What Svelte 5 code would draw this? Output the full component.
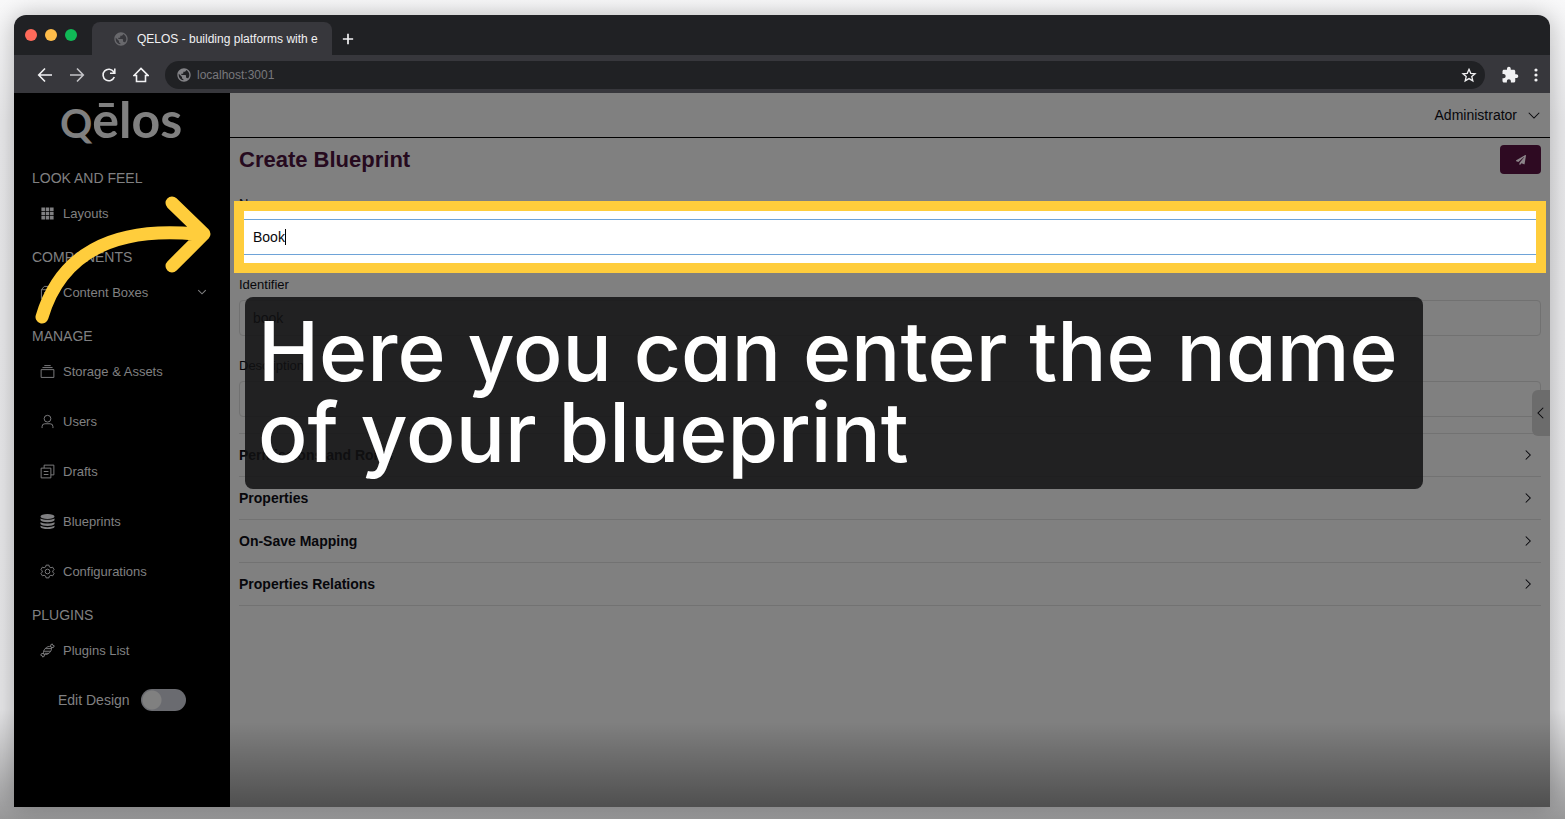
<script>
  let name = $state('Book');
  let identifier = $state('book');
  let description = $state('');

  const groups = [
    { title: 'LOOK AND FEEL', items: [{ label: 'Layouts', icon: 'grid' }] },
    { title: 'COMPONENTS', items: [{ label: 'Content Boxes', icon: 'box', more: true }] },
    {
      title: 'MANAGE',
      items: [
        { label: 'Storage & Assets', icon: 'storage' },
        { label: 'Users', icon: 'user' },
        { label: 'Drafts', icon: 'drafts' },
        { label: 'Blueprints', icon: 'database' },
        { label: 'Configurations', icon: 'gear' }
      ]
    },
    { title: 'PLUGINS', items: [{ label: 'Plugins List', icon: 'plugin' }] }
  ];

  const sections = ['Permissions and Roles', 'Properties', 'On-Save Mapping', 'Properties Relations'];
</script>

{#snippet globe()}
  <svg class="globe" viewBox="0 0 24 24" aria-hidden="true"><path fill="currentColor" d="M12 2C6.480 2 2 6.480 2 12s4.480 10 10 10 10-4.480 10-10S17.520 2 12 2zm-1 17.930c-3.950-.490-7-3.850-7-7.930 0-.620.080-1.210.210-1.790L9 15v1c0 1.100.900 2 2 2v1.930zm6.900-2.540c-.260-.810-1-1.390-1.900-1.390h-1v-3c0-.550-.450-1-1-1H8v-2h2c.550 0 1-.450 1-1V7h2c1.100 0 2-.900 2-2v-.410c2.930 1.190 5 4.060 5 7.410 0 2.080-.800 3.970-2.100 5.390z" /></svg>
{/snippet}

{#snippet chevron(d)}
  <svg class="chevron" viewBox="0 0 16 16" aria-hidden="true"><path d={d} /></svg>
{/snippet}

{#snippet menuIcon(kind)}
  <svg class="menu-icon" viewBox="0 0 16 16" aria-hidden="true">
    {#if kind === 'grid'}
      <path class="solid" d="M1.500 1.500h3.800v3.800H1.500zM6.100 1.500h3.800v3.800H6.100zM10.700 1.500h3.800v3.800h-3.800zM1.500 6.100h3.800v3.800H1.500zM6.100 6.100h3.800v3.800H6.100zM10.700 6.100h3.800v3.800h-3.800zM1.500 10.700h3.800v3.800H1.500zM6.100 10.700h3.800v3.800H6.100zM10.700 10.700h3.800v3.800h-3.800z" />
    {:else if kind === 'box'}
      <path d="M1.500 5h9v9.500h-9zM1.500 5l3-3.500h10L10.500 5M14.500 1.500v9l-4 4M4.500 8h3" />
    {:else if kind === 'storage'}
      <path d="M1.200 6h13.600v8.300H1.200zM2.600 3.800h10.800M4.600 1.700h6.800" />
    {:else if kind === 'user'}
      <circle cx="8" cy="5" r="3.600" /><path d="M2.200 15v-1.600a3 3 0 0 1 3-3h5.600a3 3 0 0 1 3 3V15" />
    {:else if kind === 'drafts'}
      <path d="M1.200 4.400h10.400v10.400H1.200zM4.400 4.400V1.200h10.400v10.400h-3.200M4 8h5M4 11.200h5" />
    {:else if kind === 'database'}
      <g class="solid"><ellipse cx="8" cy="2.600" rx="7.500" ry="2.600" /><path d="M.5 4.700c3 2 12 2 15 0v2c-1.500 2.700-13.500 2.700-15 0zM.5 8.700c3 2 12 2 15 0v2c-1.500 2.700-13.500 2.700-15 0zM.5 12.500c3 2 12 2 15 0v1.300c-1.500 2.900-13.500 2.900-15 0z" /></g>
    {:else if kind === 'gear'}
      <circle cx="8" cy="8" r="2.500" /><path d="M6.500 1.200h3l.500 1.900 1.600.9 1.900-.6 1.500 2.600-1.400 1.400v1.200l1.400 1.400-1.500 2.600-1.900-.6-1.600.9-.5 1.900h-3L6 12.900l-1.600-.9-1.900.6L1 10l1.400-1.400V7.400L1 6l1.500-2.600 1.900.6L6 3.100z" />
    {:else}
      <path d="M4 12C2.200 8 7.500 2.200 12 4 13.800 8 8.500 13.800 4 12zM3.800 8.800h7.400M5.500 6h7M5 11h4.500M11.300 4l.2-2.200 1.700-.8.500 1.500 1.500.5-.8 1.700-2.200.2M4.700 12l-.2 2.200-1.700.8-.5-1.500-1.500-.5.800-1.700 2.200-.2" />
    {/if}
  </svg>
{/snippet}

<div class="desktop">
  <div class="window">
    <header class="chrome">
      <div class="tabs">
        <div class="lights"><i class="red"></i><i class="amber"></i><i class="green"></i></div>
        <div class="tab">{@render globe()}<span>QELOS - building platforms with e</span></div>
        <button class="new-tab" aria-label="New tab"><svg viewBox="0 0 14 14"><path d="M7 1v12M1 7h12" /></svg></button>
      </div>
      <div class="toolbar">
        <button aria-label="Back"><svg viewBox="0 0 16 16"><path d="M15 8H2M8 1.500L1.700 8 8 14.500" /></svg></button>
        <button class="faded" aria-label="Forward"><svg viewBox="0 0 16 16"><path d="M1 8h13M8 1.500L14.300 8 8 14.500" /></svg></button>
        <button aria-label="Reload"><svg viewBox="0 0 16 16"><path d="M13.300 10a5.800 5.800 0 1 1-.6-5.200L13.800 6.200M13.800 1.500v4.800H9" /></svg></button>
        <button aria-label="Home"><svg viewBox="0 0 16 16"><path d="M1 8.500L8 1.500l7 7h-2.500v6h-9v-6z" /></svg></button>
        <div class="address">
          {@render globe()}
          <input aria-label="Address" value="localhost:3001" />
          <svg class="star" viewBox="0 0 24 24" aria-hidden="true"><path d="M12 3.500l2.600 6 6.500.6-4.900 4.300 1.500 6.400-5.700-3.400-5.700 3.400 1.500-6.400-4.900-4.300 6.500-.6z" /></svg>
        </div>
        <button class="ext" aria-label="Extensions"><svg viewBox="0 0 24 24"><path class="solid" d="M20.500 11H19V7c0-1.100-.900-2-2-2h-4V3.500C13 2.120 11.880 1 10.500 1S8 2.120 8 3.500V5H4c-1.100 0-1.990.900-1.990 2v3.800H3.500c1.490 0 2.700 1.210 2.700 2.700s-1.210 2.700-2.700 2.700H2V20c0 1.100.900 2 2 2h3.800v-1.500c0-1.490 1.210-2.700 2.700-2.700 1.490 0 2.700 1.210 2.700 2.700V22H17c1.100 0 2-.900 2-2v-4h1.500c1.380 0 2.500-1.120 2.500-2.500S21.880 11 20.500 11z" /></svg></button>
        <button class="dots" aria-label="Browser menu"><svg viewBox="0 0 4 16"><g class="solid"><circle cx="2" cy="3" r="1.600" /><circle cx="2" cy="8" r="1.600" /><circle cx="2" cy="13" r="1.600" /></g></svg></button>
      </div>
    </header>

    <div class="app">
      <aside class="sidebar">
        <div class="logo"><span class="initial">Q</span>ēlos</div>
        <nav>
          {#each groups as group}
            <h2>{group.title}</h2>
            {#each group.items as item}
              <a href="#{item.icon}">
                {@render menuIcon(item.icon)}
                <span>{item.label}</span>
                {#if item.more}{@render chevron('M3 5.500l5 5 5-5')}{/if}
              </a>
            {/each}
          {/each}
        </nav>
        <label class="design">Edit Design <input type="checkbox" role="switch" /></label>
        <svg class="arrow" viewBox="0 0 180 132" aria-hidden="true"><path d="M10 123C28 62 78 32 164 40M140 9l32 31-32 32" /></svg>
      </aside>

      <main>
        <div class="topbar">
          <button class="account">Administrator {@render chevron('M1 5l7 7 7-7')}</button>
        </div>
        <form class="content" onsubmit={(e) => e.preventDefault()}>
          <div class="title">
            <h1>Create Blueprint</h1>
            <button class="save" aria-label="Save"><svg viewBox="0 0 512 512"><path d="M476 3.200L12.500 270.600c-18.100 10.400-15.800 35.600 2.200 43.200L121 358.400l287.300-253.200c5.500-4.900 13.300 2.600 8.600 8.300L176 407v80.500c0 23.600 28.500 32.900 42.500 15.800L282 426l124.600 52.200c14.200 6 30.400-2.900 33-18.200l72-432C515 7.800 493.300-6.800 476 3.200z" /></svg></button>
          </div>
          <div class="field">
            <label for="name">Name</label>
            <div class="spotlight"><input id="name" bind:value={name} /><i class="caret"></i></div>
          </div>
          <div class="field">
            <label for="identifier">Identifier</label>
            <input id="identifier" bind:value={identifier} />
          </div>
          <div class="field">
            <label for="description">Description</label>
            <input id="description" bind:value={description} />
          </div>
          <div class="sections">
            {#each sections as section}
              <button type="button">{section}{@render chevron('M5 2l6 6-6 6')}</button>
            {/each}
          </div>
        </form>
        <button class="drawer" aria-label="Open panel">{@render chevron('M11 1L4 8l7 7')}</button>
        <p class="caption">Here you can enter the name<br />of your blueprint</p>
      </main>
    </div>
  </div>
</div>

<style>
  :global(body) { margin: 0; background: #f4f4f5; }
  * { box-sizing: border-box; }
  button, input { font: inherit; color: inherit; border: 0; background: none; padding: 0; margin: 0; }
  svg { display: block; flex: none; fill: none; stroke: currentColor; }
  .solid { fill: currentColor; stroke: none; }

  .desktop {
    min-height: 100vh;
    display: flex;
    padding: 15px 15px 12px 14px;
    overflow: hidden;
    font-family: "Liberation Sans", Arial, sans-serif;
    background: linear-gradient(#f9f9fa, #e9e9eb 120px, #e6e6e8 calc(100% - 110px), #989899);
  }
  .window {
    flex: 1;
    min-width: 0;
    display: flex;
    flex-direction: column;
    border-radius: 12px 12px 0 0;
    box-shadow: 0 0 24px rgba(0, 0, 0, .25);
  }

  .chrome { background: #202124; border-radius: 12px 12px 0 0; color: #f1f1f3; font-size: 12px; overflow: hidden; }
  .tabs { height: 40px; display: flex; align-items: flex-end; }
  .lights { display: flex; gap: 8px; padding: 0 15px 14px 11px; }
  .lights i { width: 12px; height: 12px; border-radius: 50%; }
  .red { background: #ff6a5a; }
  .amber { background: #ffbd4a; }
  .green { background: #10b956; }
  .tab { width: 240px; height: 33px; display: flex; align-items: center; gap: 8px; padding-left: 21px; background: #37373c; border-radius: 8px 8px 0 0; white-space: nowrap; }
  .globe { width: 16px; height: 16px; color: #828286; stroke: none; }
  .tab .globe { color: #68686c; }
  .new-tab { padding: 0 0 10px 10px; }
  .new-tab svg { width: 12px; height: 12px; stroke-width: 2; }
  .toolbar { height: 38px; display: flex; align-items: center; padding: 2px 12px 0 23px; background: #37373c; }
  .toolbar button svg { width: 16px; height: 16px; stroke-width: 1.6; }
  .toolbar button { margin-right: 16px; }
  .toolbar .faded { color: #c4c4c8; }
  .address { flex: 1; height: 28px; display: flex; align-items: center; gap: 5px; padding: 0 8px 0 11px; border-radius: 14px; background: #202124; color: #78787c; }
  .address input { flex: 1; outline: none; }
  .address .star { width: 16px; height: 16px; color: #f1f1f3; stroke-width: 2; }
  .toolbar .ext { margin: 0 15px 0 16px; }
  .toolbar .ext svg { width: 18px; height: 18px; }
  .toolbar .dots { margin: 0; }
  .toolbar .dots svg { width: 4px; }

  .app { flex: 1; display: flex; }
  .sidebar { width: 216px; flex: none; position: relative; background: #000; color: #808082; }
  .logo { height: 66px; padding-left: 46px; font: 700 50px/52px Lato, sans-serif; color: #808080; }
  .initial { font-size: 40px; }
  h2 { margin: 0; padding: 9px 18px 0; font-size: 14px; line-height: 20px; font-weight: 400; }
  nav a { display: flex; align-items: center; gap: 8px; height: 50px; padding: 0 22px 0 26px; color: inherit; text-decoration: none; font-size: 13px; }
  nav span { flex: 1; }
  .menu-icon { width: 15px; height: 15px; }
  .chevron { width: 12px; height: 12px; stroke-width: 1.4; }
  .design { display: flex; align-items: center; gap: 11px; padding: 14px 0 0 44px; font-size: 14px; }
  .design input { appearance: none; width: 45px; height: 22px; border-radius: 11px; background: radial-gradient(circle at 11px 11px, #808080 9px, #6a6b70 10px); }
  .arrow { position: absolute; left: 18px; top: 101px; width: 180px; height: 132px; stroke: #ffcd3c; stroke-width: 13; stroke-linecap: round; stroke-linejoin: round; z-index: 4; pointer-events: none; }

  main { flex: 1; min-width: 0; position: relative; background: linear-gradient(transparent calc(100% - 85px), rgba(0, 0, 0, .38)), #808080; color: #07070b; }
  .topbar { height: 45px; display: flex; justify-content: flex-end; align-items: center; padding-right: 10px; border-bottom: 1px solid #000; }
  .account { display: flex; align-items: center; gap: 11px; font-size: 14px; }
  .content { padding: 7px 9px; }
  .title { display: flex; justify-content: space-between; height: 29px; }
  h1 { margin: 0; font-size: 22px; line-height: 29px; color: #260a1e; }
  .save { width: 41px; display: grid; place-items: center; border-radius: 4px; background: #2e0a22; color: #8c858a; }
  .save svg { width: 10px; height: 10px; fill: currentColor; stroke: none; }
  .field { padding-top: 22px; font-size: 13px; line-height: 16px; }
  .field label { display: block; padding-bottom: 7px; }
  .field input { display: block; width: 100%; height: 36px; padding: 0 13px; border: 1px solid #717171; border-radius: 4px; font-size: 14px; outline: none; }
  .spotlight { position: relative; }
  .spotlight::before, .spotlight::after { content: ""; position: absolute; inset: -18px -5px; }
  .spotlight::before { background: #fff; }
  .spotlight::after { border: 10px solid #ffcd3c; pointer-events: none; }
  .field .spotlight input { position: relative; border-color: #6ea3d8; }
  .caret { position: absolute; left: 46px; top: 10px; width: 1px; height: 16px; background: #000; }
  .sections { margin-top: 16px; border-top: 1px solid #727272; }
  .sections button { width: 100%; height: 43px; display: flex; align-items: center; justify-content: space-between; padding-right: 7px; border-bottom: 1px solid #727272; font-size: 14px; font-weight: 700; }
  .drawer { position: absolute; right: 0; top: 297px; width: 18px; height: 46px; display: grid; place-items: center; border-radius: 6px 0 0 6px; background: #6c6c6c; }
  .caption {
    position: absolute;
    left: 15px;
    right: 127px;
    top: 204px;
    margin: 0;
    padding: 14px 13px 16px;
    border-radius: 8px;
    background: rgba(16, 16, 18, .85);
    color: #fff;
    font: 500 82px/81px Inter, sans-serif;
    font-feature-settings: "cv11";
    white-space: nowrap;
  }
</style>
